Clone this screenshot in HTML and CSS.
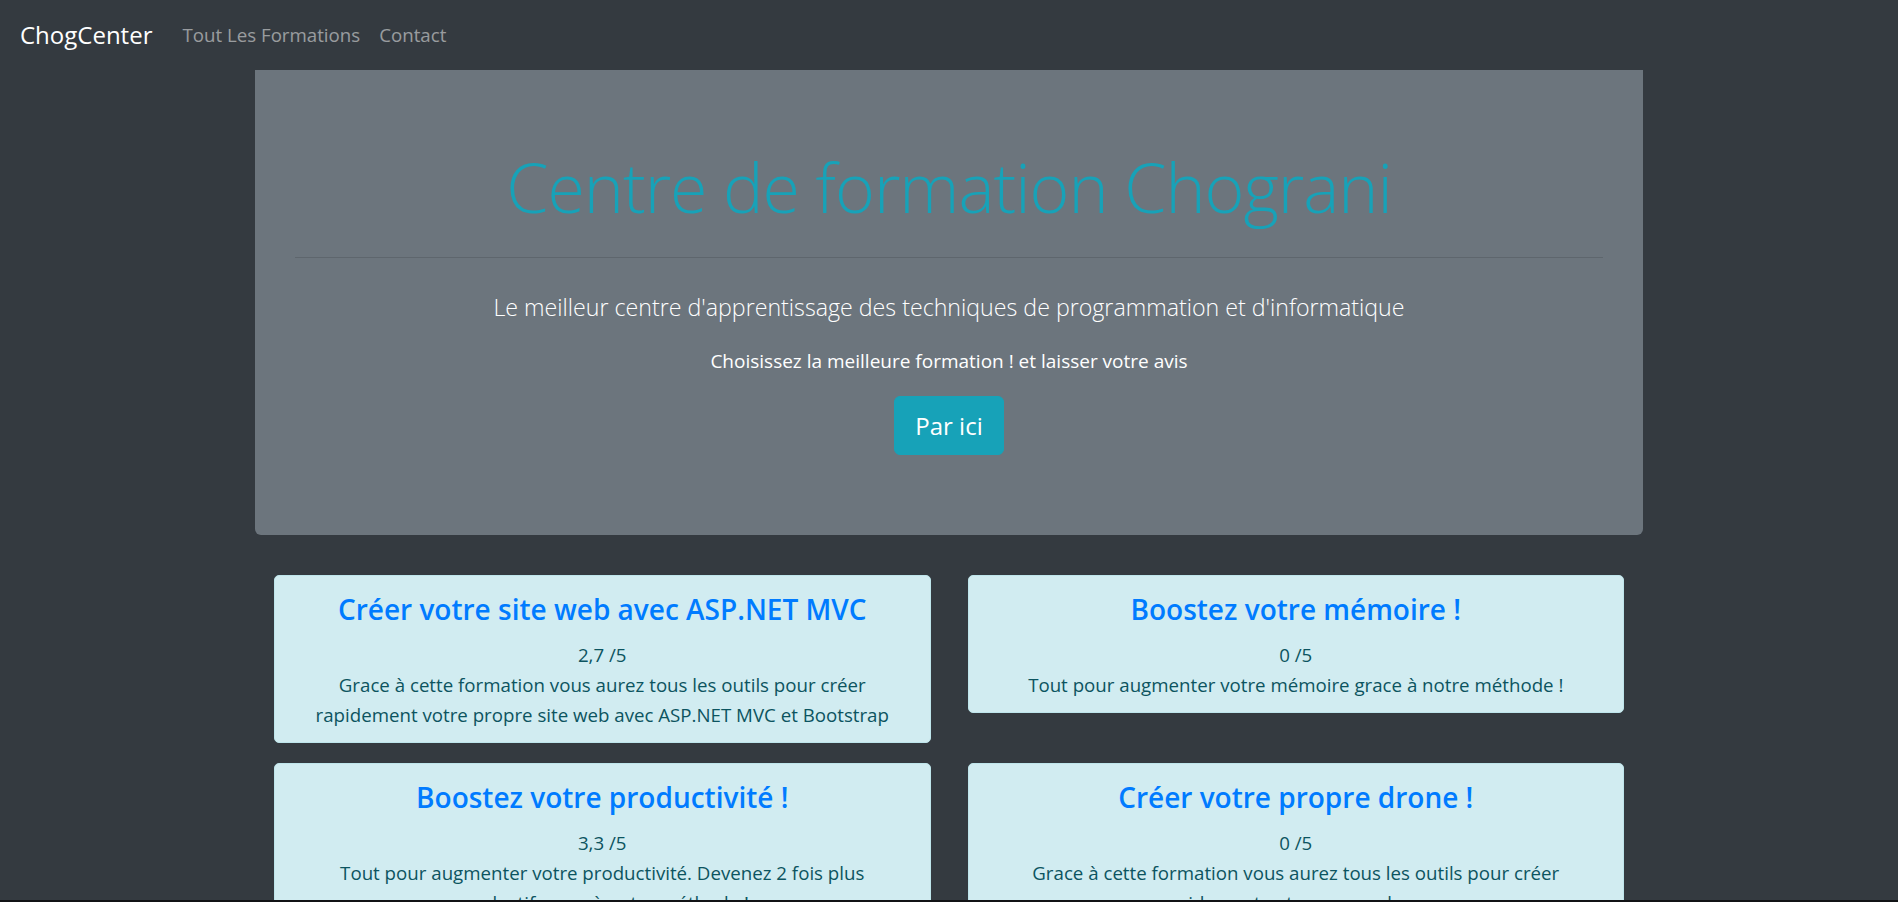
FILE: index.html
```html
<!DOCTYPE html>
<html lang="fr">
<head>
<meta charset="utf-8">
<title>ChogCenter</title>
<link rel="stylesheet" href="styles.css">
</head>
<body>
<nav class="navbar">
  <a class="brand" href="#">ChogCenter</a>
  <ul class="nav">
    <li><a class="nav-link" href="#">Tout Les Formations</a></li>
    <li><a class="nav-link" href="#">Contact</a></li>
  </ul>
</nav>
<main class="container">
  <section class="jumbotron">
    <h1 class="display">Centre de formation Chograni</h1>
    <hr class="divider">
    <p class="lead">Le meilleur centre d'apprentissage des techniques de programmation et d'informatique</p>
    <p class="sub">Choisissez la meilleure formation ! et laisser votre avis</p>
    <div class="actions"><a class="btn" href="#">Par ici</a></div>
  </section>
  <div class="cards">
    <article class="card">
      <h4 class="card-title"><a href="#">Créer votre site web avec ASP.NET MVC</a></h4>
      <p class="rating">2,7 /5</p>
      <p class="desc">Grace à cette formation vous aurez tous les outils pour créer rapidement votre propre site web avec ASP.NET MVC et Bootstrap</p>
    </article>
    <article class="card">
      <h4 class="card-title"><a href="#">Boostez votre mémoire !</a></h4>
      <p class="rating">0 /5</p>
      <p class="desc">Tout pour augmenter votre mémoire grace à notre méthode !</p>
    </article>
    <article class="card">
      <h4 class="card-title"><a href="#">Boostez votre productivité !</a></h4>
      <p class="rating">3,3 /5</p>
      <p class="desc">Tout pour augmenter votre productivité. Devenez 2 fois plus productif grace à notre méthode !</p>
    </article>
    <article class="card">
      <h4 class="card-title"><a href="#">Créer votre propre drone !</a></h4>
      <p class="rating">0 /5</p>
      <p class="desc">Grace à cette formation vous aurez tous les outils pour créer rapidement votre propre drone</p>
    </article>
  </div>
</main>
<div class="screen-edge"></div>
</body>
</html>
```

FILE: styles.css
```css
* { box-sizing: border-box; }

html, body {
  margin: 0;
  padding: 0;
}

body {
  background: #343a40;
  font-family: "Segoe UI", "Open Sans", "Noto Sans", sans-serif;
  font-size: 20px;
  line-height: 30px;
  color: #212529;
}

a { text-decoration: none; }

.navbar {
  display: flex;
  align-items: center;
  height: 70px;
  padding: 0 20px;
  background: #343a40;
}

.brand {
  color: #fff;
  font-size: 24px;
  line-height: 38px;
  margin-right: 20px;
}

.nav {
  display: flex;
  list-style: none;
  margin: 0;
  padding: 0;
}

.nav-link {
  display: block;
  padding: 0 9px 0 10px;
  color: rgba(255, 255, 255, 0.5);
  font-size: 18.7px;
}

.container {
  width: 1388px;
  margin: 0 auto;
}

.jumbotron {
  background: #6c757d;
  border-radius: 0 0 6px 6px;
  padding: 75px 40px 80px;
  text-align: center;
  margin-bottom: 40px;
}

.display {
  margin: 0;
  font-size: 68px;
  letter-spacing: -1px;
  font-weight: 300;
  line-height: 84px;
  color: #17a2b8;
}

.divider {
  margin: 28px 0 31px;
  border: 0;
  border-top: 1px solid rgba(0, 0, 0, 0.12);
}

.lead {
  margin: 0 0 20px;
  font-size: 23.2px;
  line-height: 37px;
  font-weight: 300;
  color: #fff;
}

.sub {
  margin: 0 0 20px;
  font-size: 19px;
  line-height: 30px;
  color: #fff;
}

.actions {
  display: flex;
  justify-content: center;
}

.btn {
  display: inline-block;
  background: #17a2b8;
  border: 1px solid #17a2b8;
  border-radius: 6px;
  color: #fff;
  font-size: 24px;
  line-height: 37px;
  padding: 10px 20px;
}

.cards {
  display: grid;
  grid-template-columns: 1fr 1fr;
  column-gap: 37px;
  row-gap: 20px;
  align-items: start;
  padding: 0 19px;
}

.card {
  background: #d1ecf1;
  border: 1px solid #bee5eb;
  border-radius: 5px;
  padding: 15px 25px 12px;
  text-align: center;
  color: #0c5460;
}

.card-title {
  margin: 0 0 13px;
  font-size: 28px;
  line-height: 36px;
  font-weight: 600;
}

.card-title a { color: #007bff; }

.rating, .desc {
  margin: 0;
  font-size: 18.7px;
  line-height: 30px;
}

.screen-edge {
  position: fixed;
  left: 0;
  right: 0;
  bottom: 0;
  height: 2px;
  background: #111315;
}
```
